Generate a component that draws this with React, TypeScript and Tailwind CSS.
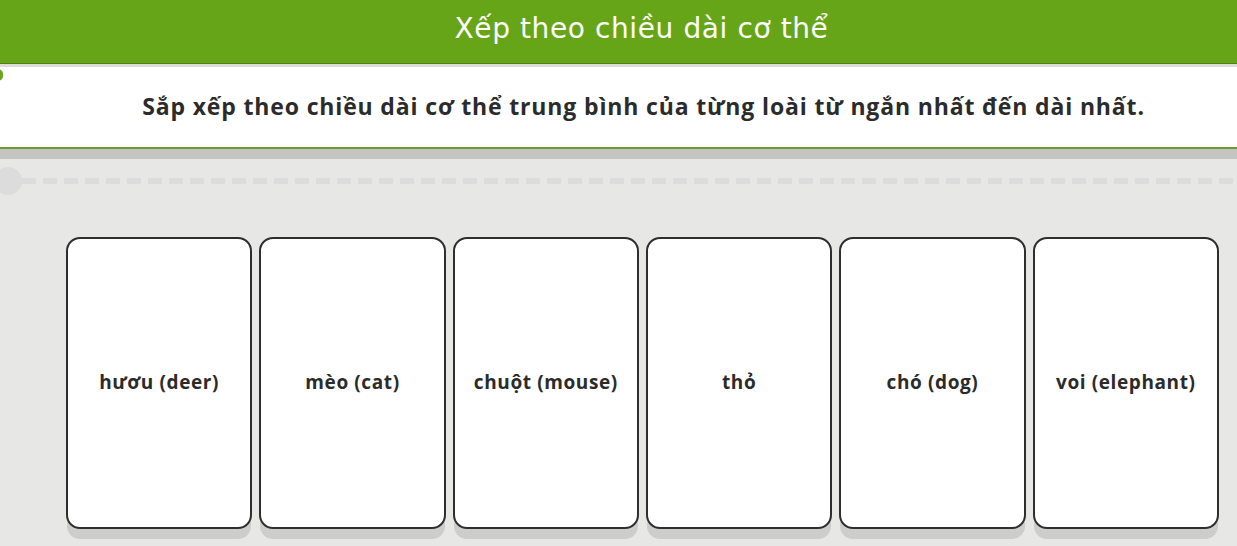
const animals = [
  "hươu (deer)",
  "mèo (cat)",
  "chuột (mouse)",
  "thỏ",
  "chó (dog)",
  "voi (elephant)",
];

// Dashed track under the instruction panel
function Track() {
  return (
    <div className="relative h-[30px] mt-[7px]">
      <div className="absolute left-[-6px] top-[1px] w-[28px] h-[28px] rounded-full bg-[#dcdcdc]" />
      <div className="absolute left-[22px] right-0 top-[12px] h-[6px] bg-[repeating-linear-gradient(90deg,#dcdcdc_0px,#dcdcdc_14px,transparent_14px,transparent_21px)]" />
    </div>
  );
}

export default function App() {
  return (
    <div className="w-[1237px] h-[546px] overflow-hidden bg-[#e7e7e6] font-['Open_Sans',sans-serif]">
      <header className="h-[63px] bg-[#67a518] flex items-center justify-center">
        <h1 className="text-white text-[28px] font-['DejaVu_Sans',sans-serif] tracking-[0.6px] -mt-[5px] pl-[46px]">
          Xếp theo chiều dài cơ thể
        </h1>
      </header>
      <div className="h-px bg-[#4f8213]" />
      <div className="h-[3px] bg-[#dcdcd8]" />
      <div className="relative h-[82px] bg-white border-b-2 border-[#6b9a2f] flex items-center justify-center">
        <div className="absolute left-[-7px] top-[2px] w-[10px] h-[12px] rounded-full bg-[#6aa61d]" />
        <p className="text-[#2b2b2b] text-[23px] font-bold tracking-[0.85px] -mt-[1px] pl-[50px]">
          Sắp xếp theo chiều dài cơ thể trung bình của từng loài từ ngắn nhất đến dài nhất.
        </p>
      </div>
      <div className="h-[10px] bg-[#c4c4c2]" />
      <Track />
      <div className="grid grid-cols-6 gap-[7px] w-[1153px] ml-[66px] mt-[41px]">
        {animals.map((name) => (
          <div
            key={name}
            className="h-[292px] bg-white border-2 border-[#2e2e2e] rounded-[14px] shadow-[0_11px_0_-1px_#cdcdcb] flex items-center justify-center"
          >
            <span className="text-[#2b2b2b] text-[19px] font-bold tracking-[0.6px] -mt-[1px]">{name}</span>
          </div>
        ))}
      </div>
    </div>
  );
}
